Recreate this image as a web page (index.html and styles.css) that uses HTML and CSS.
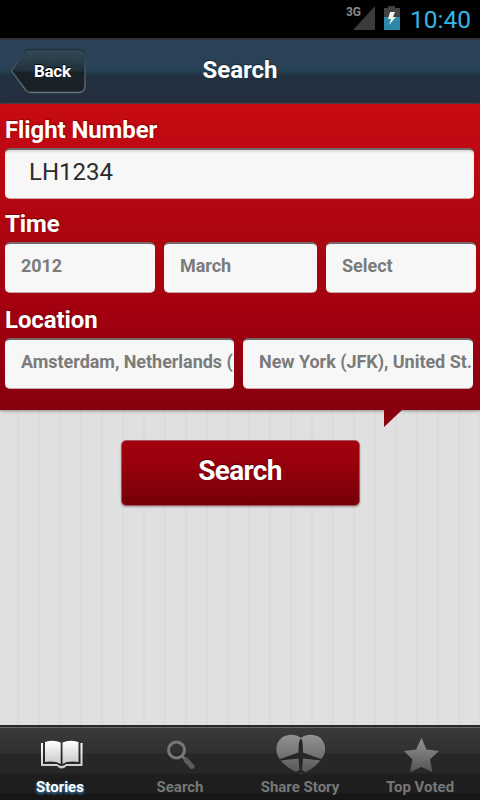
FILE: index.html
```html
<!DOCTYPE html>
<html lang="en">
<head>
    <meta charset="UTF-8">
    <meta name="viewport" content="width=device-width, initial-scale=1.0">
    <title>Search</title>
    <link rel="stylesheet" href="styles.css">
</head>
<body>
    <!-- status bar -->
    <div class="status">
        <span class="network">3G</span>
        <svg class="signal" width="22" height="24" viewBox="0 0 22 24"><path d="M22 0V24H0Z" fill="#3b3b3b"/></svg>
        <svg class="battery" width="16" height="24" viewBox="0 0 16 24">
            <path d="M4 0H11V2H16V11H0V2H4Z" fill="#414141"/>
            <path d="M0 11H16V24H0Z" fill="#2c88a8"/>
            <path d="M6 6H11L9 11H12L5 19L7 13H4Z" fill="#f2f2e8"/>
        </svg>
        <span class="clock">10:40</span>
    </div>

    <!-- header -->
    <div class="header">
        <a href="javascript:;" class="back-btn">
            <svg class="back-shape" width="76" height="46" viewBox="0 0 76 46">
                <defs>
                    <linearGradient id="back-fill" x1="0" y1="0" x2="0" y2="1">
                        <stop offset="0" stop-color="#344a58"/>
                        <stop offset=".48" stop-color="#20323b"/>
                        <stop offset=".54" stop-color="#182126"/>
                        <stop offset="1" stop-color="#1b2327"/>
                    </linearGradient>
                    <linearGradient id="back-line" x1="0" y1="0" x2="0" y2="1">
                        <stop offset="0" stop-color="#20303d"/>
                        <stop offset=".5" stop-color="#4c5c66"/>
                        <stop offset="1" stop-color="#68747d"/>
                    </linearGradient>
                </defs>
                <path d="M19 1.500H69Q75 1.500 75 7V38Q75 44.500 68 44.500H21Q17 44.500 15 41L1.500 23L14 5Q16 1.500 19 1.500Z" fill="url(#back-fill)" stroke="url(#back-line)" stroke-width="1.300"/>
            </svg>
            <span class="back-text">Back</span>
        </a>
        <h1 class="title">Search</h1>
    </div>

    <!-- search form -->
    <div class="panel">
        <label class="label" for="flight">Flight Number</label>
        <input type="text" class="field flight" id="flight" value="LH1234">

        <div class="label">Time</div>
        <div class="row time">
            <div class="field select">2012</div>
            <div class="field select">March</div>
            <div class="field select">Select</div>
        </div>

        <div class="label">Location</div>
        <div class="row location">
            <div class="field select">Amsterdam, Netherlands (</div>
            <div class="field select">New York (JFK), United St.</div>
        </div>
    </div>

    <div class="content">
        <button type="button" class="search-btn">Search</button>
    </div>

    <!-- tab bar -->
    <div class="tabs">
        <a href="javascript:;" class="tab active">
            <svg class="icon" width="50" height="40" viewBox="0 0 50 40">
                <defs>
                    <linearGradient id="white" x1="0" y1="0" x2="0" y2="1">
                        <stop offset="0" stop-color="#fff"/>
                        <stop offset="1" stop-color="#c8c8c8"/>
                    </linearGradient>
                    <linearGradient id="gray" x1="0" y1="0" x2="0" y2="1">
                        <stop offset="0" stop-color="#939393"/>
                        <stop offset="1" stop-color="#555"/>
                    </linearGradient>
                </defs>
                <path d="M6 9H8V30H22Q26.500 34 31 30H45.500V9H47.500V32H31.500Q26.500 37 22 32H6Z" fill="url(#white)"/>
                <path d="M10 8Q19 5.500 25.700 8.500V30Q20 26.500 10 28ZM27.500 8.500Q34 5.500 43.500 8V28Q33 26.500 27.500 30Z" fill="url(#white)"/>
            </svg>
            <span class="tab-text">Stories</span>
        </a>
        <a href="javascript:;" class="tab">
            <svg class="icon" width="50" height="40" viewBox="0 0 50 40">
                <circle cx="21.500" cy="16" r="8" fill="none" stroke="#777" stroke-width="3"/>
                <path d="M27.500 22.500L30 25" stroke="#777" stroke-width="2.500"/>
                <path d="M31 26L37 32.500" stroke="#5d5d5d" stroke-width="5" stroke-linecap="round"/>
            </svg>
            <span class="tab-text">Search</span>
        </a>
        <a href="javascript:;" class="tab">
            <svg class="icon" width="50" height="40" viewBox="0 0 50 40">
                <path d="M26 4C21 0 13-.5 7 3.500C0 9 0 18 4 24C9 32 18 37 26 40C34 37 42 32 47 24C52 18 51 9 45 3.500C39-.5 31 0 26 4Z" fill="url(#gray)"/>
                <path d="M26 4.500C27.500 6 28 10 28 18.500L46 25V26.500L28 24.500L27 36L31 38.500V40L26 39L20 40V38.500L24.500 36L23.500 24.500L5 26.500V25L23.500 18.500C23.500 10 24 6 26 4.500Z" fill="#272727"/>
            </svg>
            <span class="tab-text">Share Story</span>
        </a>
        <a href="javascript:;" class="tab">
            <svg class="icon" width="50" height="40" viewBox="0 0 50 40">
                <path d="M26.500 4L31.500 15.500L44 17L35 25.500L37.500 38L26.500 33L15 38L17.500 25.500L9 17L21 15.500Z" fill="url(#gray)"/>
            </svg>
            <span class="tab-text">Top Voted</span>
        </a>
    </div>
</body>
</html>
```
FILE: styles.css
```css
* {
    margin: 0;
    padding: 0;
    box-sizing: border-box;
}

a {
    text-decoration: none;
}

body {
    display: flex;
    flex-direction: column;
    height: 800px;
    overflow: hidden;
    font-family: Roboto, "Liberation Sans", sans-serif;
    background-color: #dfdfdf;
}

/* status bar */

.status {
    display: flex;
    justify-content: flex-end;
    height: 38px;
    padding: 6px 9px 0 0;
    background-color: #000;
}

.network {
    margin-right: -8px;
    font-size: 12px;
    font-weight: 700;
    line-height: 13px;
    color: #8a8a8a;
}

.signal {
    margin-right: 9px;
}

.battery {
    margin-right: 10px;
}

.clock {
    padding-top: 1px;
    font-size: 24.5px;
    line-height: 26px;
    color: #33b5e5;
}

/* header */

.header {
    display: grid;
    grid-template-columns: 76px 1fr 76px;
    height: 66px;
    padding: 8px 10px 0;
    border-top: 2px solid #30343a;
    border-bottom: 1px solid #432838;
    background: linear-gradient(#2c4259, #2a4158 45%, #22404f 50%, #223140 57%, #232e3e);
}

.back-btn {
    display: grid;
    height: 46px;
}

.back-shape,
.back-text {
    grid-area: 1 / 1;
}

.back-text {
    padding-left: 24px;
    font-size: 17px;
    font-weight: 700;
    line-height: 46px;
    letter-spacing: -.3px;
    color: #fff;
    text-shadow: 0 -1px 1px #000;
}

.title {
    font-size: 24px;
    font-weight: 700;
    line-height: 45px;
    text-align: center;
    color: #fff;
    text-shadow: 0 -1px 1px #182431;
}

/* red form panel */

.panel {
    position: relative;
    height: 306px;
    padding: 10px 4px 0 5px;
    background: linear-gradient(#c70a13, #a9050f 50%, #a3000f 68%, #86000e);
    box-shadow: 0 1px 3px #888;
}

.panel::after {
    content: "";
    position: absolute;
    left: 384px;
    top: 306px;
    width: 18px;
    height: 17px;
    background-color: #8b000f;
    clip-path: polygon(0 0, 100% 0, 0 100%);
}

.label {
    display: block;
    height: 34px;
    font-size: 24px;
    font-weight: 700;
    line-height: 33px;
    letter-spacing: -.1px;
    color: #fff;
    text-shadow: 1px -1px 1px rgba(70, 0, 0, .5);
}

.field {
    display: block;
    height: 51px;
    border: 0;
    border-top: 2px solid #756967;
    border-bottom: 1px solid #c9a9a9;
    border-radius: 5px;
    background-color: #f7f7f7;
}

.flight {
    width: 469px;
    margin-bottom: 9px;
    padding: 0 24px 4px;
    font-family: inherit;
    font-size: 24px;
    color: #2b2b2b;
    box-shadow: inset 0 2px 2px #ddd;
}

.row {
    display: grid;
    gap: 9px;
}

.time {
    grid-template-columns: 150px 153px 150px;
    margin-bottom: 11px;
}

.location {
    grid-template-columns: 229px 230px;
}

.select {
    overflow: hidden;
    padding-left: 16px;
    font-size: 18px;
    font-weight: 700;
    line-height: 44px;
    letter-spacing: -.04px;
    white-space: nowrap;
    color: #7b7b7b;
}

/* search button */

.content {
    flex: 1;
    padding-top: 30px;
    text-align: center;
    background: repeating-linear-gradient(90deg, #e0e0e0 0 17px, #dbdbdb 17px 19px, #e0e0e0 19px 21px);
}

.search-btn {
    width: 239px;
    height: 66px;
    padding-bottom: 6px;
    border: 1px solid #a5585f;
    border-radius: 5px;
    font-family: inherit;
    font-size: 28px;
    font-weight: 700;
    letter-spacing: -.7px;
    color: #fff;
    text-shadow: 0 -1px 1px #500;
    background: linear-gradient(#a3000f, #94000b 45%, #740008);
    box-shadow: 0 1px 2px #999;
}

/* bottom tabs */

.tabs {
    display: grid;
    grid-template-columns: repeat(4, 1fr);
    height: 75px;
    border-top: 2px solid #292929;
    background: linear-gradient(#666 0 1px, #393939 1px, #303030 26px, #272727 27px 46px, #1e1e1e 47px 66px, #161616 67px);
}

.tab {
    display: flex;
    flex-direction: column;
    align-items: center;
    padding-top: 7px;
}

.tab-text {
    margin-top: 4px;
    font-size: 15px;
    font-weight: 700;
    line-height: 18px;
    color: #777;
}

.active .tab-text {
    color: #fff;
    text-shadow: 0 1px 3px #3d7ba4, 0 2px 3px #2b5477;
}
```
